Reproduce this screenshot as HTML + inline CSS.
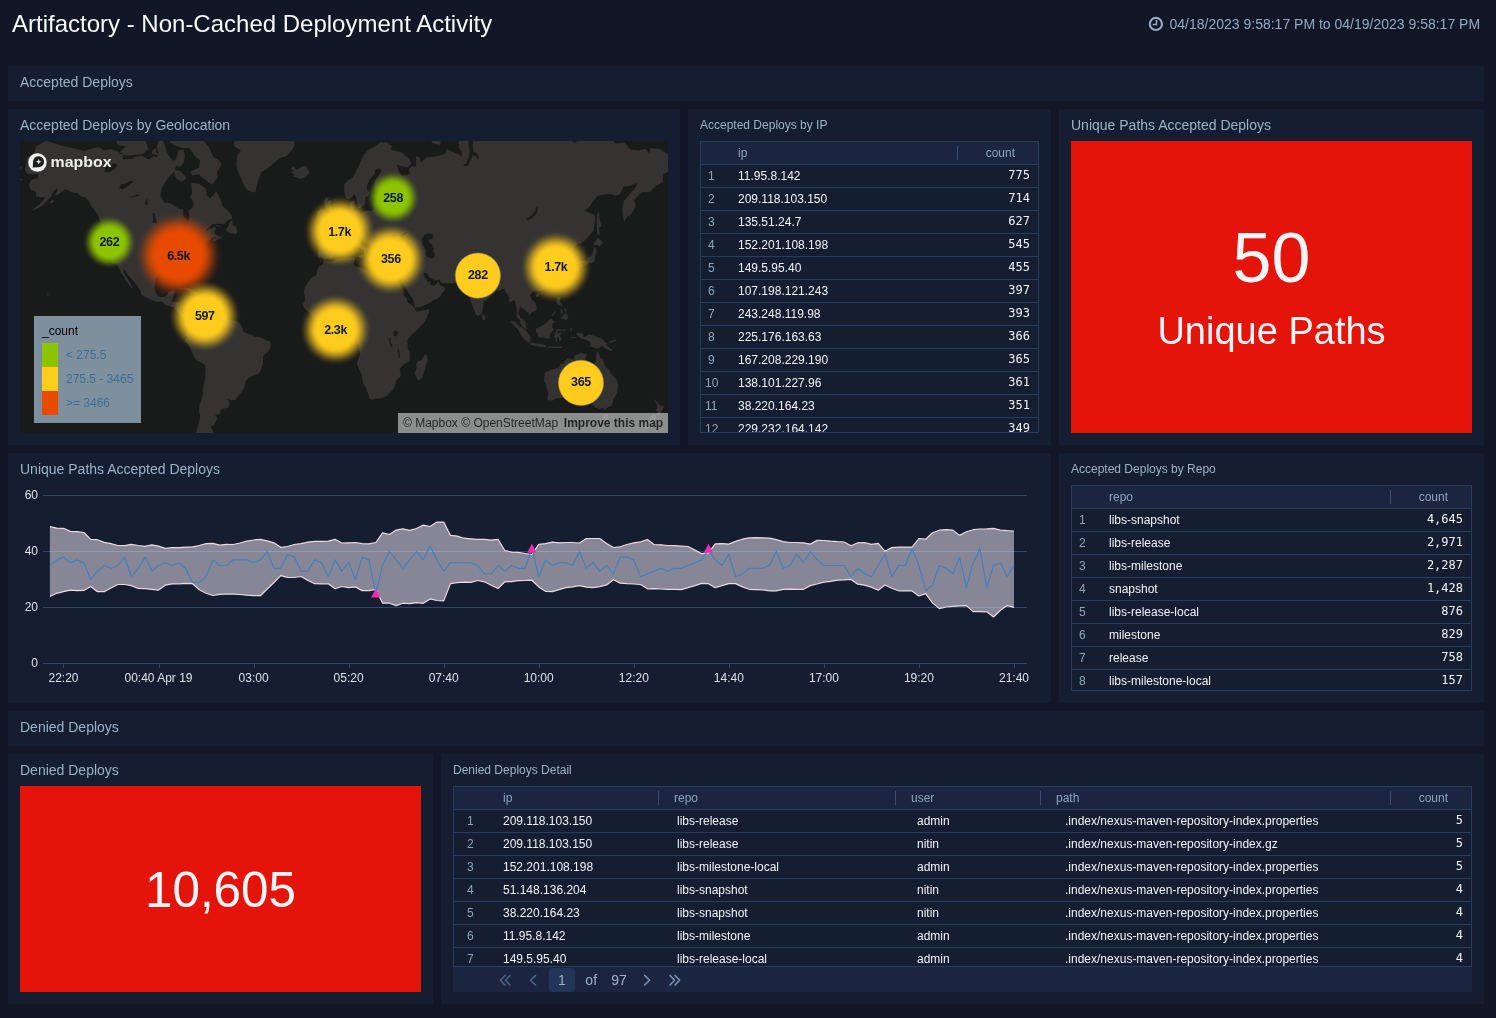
<!DOCTYPE html>
<html lang="en"><head><meta charset="utf-8"><title>Artifactory - Non-Cached Deployment Activity</title>
<style>
*{box-sizing:border-box;margin:0;padding:0}
html,body{width:1496px;height:1018px;overflow:hidden;background:#111726;font-family:"Liberation Sans",sans-serif;}
#root{position:absolute;left:0;top:0;width:1496px;height:1018px;will-change:transform}
.abs{position:absolute}
.panel{position:absolute;background:#151d30}
.ptitle{position:absolute;left:12px;top:8px;font-size:14px;line-height:16px;color:#9cb2c9;white-space:nowrap}
.ptitle.sm{font-size:12px;top:8px}
.sec{position:absolute;left:8px;width:1476px;height:35px;background:#151d30;color:#9cb2c9;font-size:14px;line-height:16px;padding:8px 12px}
.tbl{position:absolute;border:1px solid #283c5e;overflow:hidden;font-size:12px}
.tr{position:absolute;left:0;right:0;height:23px;border-bottom:1px solid #283c5e;}
.tr.h{background:#1b2540;color:#8ea4bc}
.c{position:absolute;top:0;line-height:22px;white-space:nowrap;color:#f0f3f7}
.tr.h .c{color:#8ea4bc}
.c.n{color:#8ea4bc}
.c.m{font-family:"DejaVu Sans Mono",monospace;text-align:right;top:-1px}
.sep{position:absolute;top:4px;width:1px;height:14px;background:#3b4e6e}
</style></head>
<body>
<div id="root">
<div class="abs" style="left:12px;top:10px;font-size:24px;line-height:28px;color:#f6f8fa;white-space:nowrap">Artifactory - Non-Cached Deployment Activity</div>
<svg class="abs" style="left:1147px;top:15px" width="18" height="18" viewBox="0 0 18 18"><circle cx="8.9" cy="8.95" r="6.1" fill="none" stroke="#96aac0" stroke-width="2.1"/><path d="M9.5 5.1V9.5H5.7" fill="none" stroke="#96aac0" stroke-width="1.6"/></svg>
<div class="abs" style="left:1169.5px;top:16px;font-size:14px;line-height:16px;color:#96aac0;white-space:nowrap">04/18/2023 9:58:17 PM to 04/19/2023 9:58:17 PM</div>
<div class="sec" style="top:66px">Accepted Deploys</div>
<div class="sec" style="top:711px">Denied Deploys</div>
<div class="panel" style="left:8px;top:109px;width:672px;height:336px"><div class="ptitle">Accepted Deploys by Geolocation</div><svg class="abs" style="left:12px;top:32px" width="648" height="292" viewBox="20 141 648 292" font-family="Liberation Sans, sans-serif">
<rect x="20" y="141" width="648" height="292" fill="#191a1a"/>
<path d="M25.0,169.5L27.8,156.8L34.3,153.2L36.3,146.3L46.1,140.7L54.6,143.5L61.9,145.8L74.9,148.5L84.1,151.1L89.6,149.0L98.8,146.9L104.4,150.6L111.8,149.0L122.8,153.7L122.8,159.2L132.1,158.7L135.7,156.8L141.3,155.8L148.7,159.2L154.2,156.3L157.9,157.3L156.0,150.6L157.9,142.4L160.6,137.2L164.3,143.5L166.2,150.6L168.9,155.8L172.6,160.7L176.3,159.2L178.2,150.6L183.7,149.6L185.0,155.8L183.7,163.1L180.0,166.8L176.3,165.9L174.5,171.3L170.8,175.2L168.0,178.1L164.3,183.8L161.6,188.4L160.3,195.8L164.3,202.8L168.9,202.8L172.6,204.5L178.2,208.4L183.2,209.1L183.3,216.0L187.4,221.1L189.2,220.2L189.6,215.7L188.3,210.7L192.9,207.1L193.7,202.8L190.2,196.9L192.0,192.2L191.1,183.0L198.5,183.4L205.8,188.4L206.8,195.8L210.5,198.3L214.2,194.0L216.0,190.7L220.6,199.4L222.5,206.1L228.0,211.0L231.7,215.7L232.2,218.7L227.1,220.8L224.3,224.0L216.9,223.7L212.3,224.0L207.7,228.8L204.0,233.2L208.6,229.6L215.1,226.8L216.4,228.2L214.2,231.0L215.4,234.3L217.8,235.6L221.5,236.7L224.3,234.3L222.5,237.4L217.8,239.5L213.6,241.8L212.9,239.5L216.0,236.9L211.4,238.2L211.4,239.3L207.7,240.8L205.3,242.1L204.6,244.6L205.8,246.6L203.1,247.3L198.5,249.3L198.1,252.0L195.7,254.3L194.8,257.4L195.3,261.0L193.3,263.1L191.1,264.8L188.7,266.8L185.6,269.5L184.8,272.3L186.7,278.6L187.2,282.1L185.9,283.5L184.1,281.7L182.4,278.0L182.2,275.0L180.0,273.3L177.3,274.0L173.6,272.7L170.8,272.9L170.1,275.0L167.1,274.8L161.9,274.0L159.7,275.0L156.0,277.6L155.1,281.7L154.6,288.8L156.0,292.7L157.9,295.7L160.6,297.2L165.3,296.5L167.7,294.7L168.2,291.8L172.6,290.6L174.9,291.2L173.6,294.7L172.6,298.6L171.3,301.5L176.3,301.7L180.9,303.0L181.3,308.2L180.6,311.0L182.8,314.2L185.6,315.1L188.3,313.8L191.5,315.1L192.4,315.7L192.0,317.5L190.2,315.7L187.4,317.9L184.6,317.2L181.9,316.0L178.2,312.9L176.7,311.0L173.6,307.2L169.9,306.3L166.2,305.3L161.6,301.5L157.0,302.1L151.4,300.1L146.8,297.6L141.3,294.7L140.4,290.8L138.5,287.2L134.8,282.7L131.1,278.6L127.4,274.4L125.6,270.5L123.2,269.7L123.7,273.3L126.9,277.6L129.7,281.7L131.5,285.4L133.0,287.6L131.7,287.8L128.4,284.1L124.7,279.6L124.1,276.5L121.3,273.3L119.0,267.9L116.4,264.6L112.5,263.5L110.1,258.7L109.0,256.0L106.6,252.0L105.7,249.8L105.9,243.4L106.2,235.1L104.9,229.1L108.1,227.4L105.3,224.6L100.7,221.7L98.8,217.2L95.2,211.0L92.4,207.8L88.7,201.1L85.0,197.6L81.3,196.5L77.1,192.9L71.2,192.2L65.6,189.2L61.0,192.2L58.2,194.7L55.1,195.1L58.2,187.7L53.6,191.1L50.9,196.5L46.3,201.8L42.6,205.5L37.0,208.7L31.5,210.7L36.1,206.8L39.8,204.5L43.5,200.0L45.0,196.9L41.6,197.2L36.1,196.5L36.1,192.2L30.6,189.2L28.7,184.6L31.5,179.8L38.0,178.1L38.0,173.9L34.3,174.3L27.8,173.9Z M689.2,169.5L692.0,156.8L698.5,153.2L700.5,146.3L710.3,140.7L718.8,143.5L726.1,145.8L739.1,148.5L748.3,151.1L753.8,149.0L763.0,146.9L768.6,150.6L776.0,149.0L787.0,153.7L787.0,159.2L796.2,158.7L799.9,156.8L805.5,155.8L812.9,159.2L818.4,156.3L822.1,157.3L820.2,150.6L822.1,142.4L824.8,137.2L828.5,143.5L830.4,150.6L833.1,155.8L836.8,160.7L840.5,159.2L842.4,150.6L847.9,149.6L849.2,155.8L847.9,163.1L844.2,166.8L840.5,165.9L838.7,171.3L835.0,175.2L832.2,178.1L828.5,183.8L825.8,188.4L824.5,195.8L828.5,202.8L833.1,202.8L836.8,204.5L842.4,208.4L847.4,209.1L847.5,216.0L851.6,221.1L853.4,220.2L853.8,215.7L852.5,210.7L857.1,207.1L857.9,202.8L854.4,196.9L856.2,192.2L855.3,183.0L862.7,183.4L870.0,188.4L871.0,195.8L874.7,198.3L878.4,194.0L880.2,190.7L884.8,199.4L886.7,206.1L892.2,211.0L895.9,215.7L896.4,218.7L891.3,220.8L888.5,224.0L881.1,223.7L876.5,224.0L871.9,228.8L868.2,233.2L872.8,229.6L879.3,226.8L880.6,228.2L878.4,231.0L879.6,234.3L882.0,235.6L885.7,236.7L888.5,234.3L886.7,237.4L882.0,239.5L877.8,241.8L877.1,239.5L880.2,236.9L875.6,238.2L875.6,239.3L871.9,240.8L869.5,242.1L868.8,244.6L870.0,246.6L867.3,247.3L862.7,249.3L862.3,252.0L859.9,254.3L859.0,257.4L859.5,261.0L857.5,263.1L855.3,264.8L852.9,266.8L849.8,269.5L849.0,272.3L850.9,278.6L851.4,282.1L850.1,283.5L848.3,281.7L846.6,278.0L846.4,275.0L844.2,273.3L841.5,274.0L837.8,272.7L835.0,272.9L834.3,275.0L831.3,274.8L826.1,274.0L823.9,275.0L820.2,277.6L819.3,281.7L818.8,288.8L820.2,292.7L822.1,295.7L824.8,297.2L829.5,296.5L831.9,294.7L832.4,291.8L836.8,290.6L839.1,291.2L837.8,294.7L836.8,298.6L835.5,301.5L840.5,301.7L845.1,303.0L845.5,308.2L844.8,311.0L847.0,314.2L849.8,315.1L852.5,313.8L855.7,315.1L856.6,315.7L856.2,317.5L854.4,315.7L851.6,317.9L848.8,317.2L846.1,316.0L842.4,312.9L840.9,311.0L837.8,307.2L834.1,306.3L830.4,305.3L825.8,301.5L821.2,302.1L815.6,300.1L811.0,297.6L805.5,294.7L804.6,290.8L802.7,287.2L799.0,282.7L795.3,278.6L791.6,274.4L789.8,270.5L787.4,269.7L787.9,273.3L791.1,277.6L793.9,281.7L795.7,285.4L797.2,287.6L795.9,287.8L792.6,284.1L788.9,279.6L788.3,276.5L785.5,273.3L783.2,267.9L780.6,264.6L776.7,263.5L774.3,258.7L773.2,256.0L770.8,252.0L769.9,249.8L770.1,243.4L770.4,235.1L769.1,229.1L772.3,227.4L769.5,224.6L764.9,221.7L763.0,217.2L759.3,211.0L756.6,207.8L752.9,201.1L749.2,197.6L745.5,196.5L741.3,192.9L735.4,192.2L729.8,189.2L725.2,192.2L722.5,194.7L719.3,195.1L722.5,187.7L717.8,191.1L715.1,196.5L710.5,201.8L706.8,205.5L701.2,208.7L695.7,210.7L700.3,206.8L704.0,204.5L707.7,200.0L709.2,196.9L705.8,197.2L700.3,196.5L700.3,192.2L694.8,189.2L692.9,184.6L695.7,179.8L702.2,178.1L702.2,173.9L698.5,174.3L692.0,173.9Z M221.5,164.5L216.9,172.2L217.8,177.3L215.1,181.0L212.3,184.6L208.6,182.2L203.1,178.1L198.5,174.3L192.0,175.2L191.1,171.3L198.5,167.7L200.3,160.7L194.8,155.8L189.2,147.9L181.9,147.9L174.5,145.2L169.9,142.4L170.8,127.3L178.2,126.0L187.4,126.0L194.8,131.7L204.0,141.3L209.5,147.9L213.2,156.8L220.6,161.6Z M119.1,153.2L126.5,155.8L135.7,154.8L143.1,154.2L148.7,149.0L145.0,139.5L141.3,130.5L132.1,130.5L124.7,128.6L117.3,133.6L115.4,139.5L118.2,145.2L126.5,146.3L121.0,150.6Z M103.5,136.6L108.1,141.3L112.7,139.5L117.3,133.6L121.0,127.3L115.4,121.9L106.2,121.9L104.4,130.5Z M151.4,153.2L156.0,155.3L158.8,152.2L157.0,148.5L153.3,149.0Z M174.5,169.9L180.0,170.8L185.6,176.4L186.5,178.5L181.9,181.4L176.3,178.5L174.5,175.2Z M225.6,231.3L231.7,233.5L236.3,234.0L237.8,231.3L236.3,228.8L235.7,226.6L232.6,225.1L232.2,220.2L229.8,221.7L228.4,226.0L226.1,229.6Z M107.1,229.1L103.5,228.0L98.3,222.5L100.7,222.2L104.4,224.6L106.8,227.4Z M178.2,290.2L181.9,288.0L185.6,287.4L191.1,289.0L195.7,291.8L198.1,293.3L196.6,293.9L191.6,293.9L190.2,291.8L185.6,290.0L182.8,289.2L180.0,289.8Z M197.7,296.5L199.6,294.1L202.7,293.9L206.0,294.3L208.8,296.5L205.8,297.0L203.3,298.2L201.2,297.2L197.7,297.0Z M190.5,296.9L192.9,296.7L194.2,297.6L192.0,298.0Z M211.0,296.7L213.8,296.9L213.6,297.6L211.0,297.6Z M298.1,109.7L298.1,124.0L294.4,136.6L294.4,145.2L293.5,147.9L287.0,155.8L279.6,158.3L274.1,163.1L266.7,169.1L261.2,172.2L257.5,182.6L255.3,192.2L252.0,192.2L246.4,189.2L242.8,182.6L239.1,174.3L236.3,165.4L237.2,155.8L240.9,150.6L234.4,146.3L234.1,139.5L231.7,130.5L228.0,109.7Z M290.2,169.5L293.5,165.9L296.3,169.9L301.8,166.8L305.5,165.4L308.1,169.9L309.9,172.2L307.3,175.2L300.9,178.9L296.3,177.3L293.1,176.9L294.4,174.3L290.7,172.6L294.4,170.8Z M192.4,315.5L194.8,314.0L196.6,311.4L198.5,310.6L202.2,308.7L203.5,310.0L205.8,309.1L209.5,311.7L215.1,312.5L220.6,311.5L222.5,313.8L224.3,315.7L229.8,320.3L235.4,320.7L240.0,323.1L242.8,328.6L242.8,331.4L246.4,333.2L252.0,334.7L253.8,336.4L258.4,336.8L263.0,338.2L266.4,340.3L270.1,341.6L270.8,346.2L268.6,350.9L265.8,353.7L263.0,356.5L263.0,363.2L261.2,369.1L259.4,373.0L254.7,375.0L250.1,377.0L245.5,381.1L245.1,386.3L241.8,391.6L238.1,396.0L235.4,399.7L230.8,400.2L227.4,398.6L229.5,403.1L228.7,407.3L220.6,409.7L220.2,414.5L215.1,414.5L217.3,418.2L214.5,424.6L210.5,427.2L213.6,431.2L209.5,438.2L207.7,442.6L208.8,445.3L204.0,449.6L198.5,444.1L195.7,435.4L197.5,427.2L200.3,416.9L199.0,410.8L199.4,405.0L201.2,400.4L203.1,393.8L203.3,387.3L204.9,379.1L205.5,371.0L205.3,365.8L202.2,363.2L196.6,360.2L194.2,357.1L192.6,353.7L189.2,346.2L187.4,343.4L185.2,341.6L185.0,339.3L187.4,337.5L185.7,335.5L186.5,332.3L187.4,329.9L189.2,328.6L190.0,326.8L192.0,324.0L192.0,319.4L191.1,317.5Z M324.1,260.6L331.3,261.9L336.8,259.0L344.2,258.3L351.6,257.4L353.8,257.4L355.3,258.3L354.4,261.3L353.4,264.2L355.3,266.2L359.0,267.1L363.0,268.4L367.3,271.4L371.0,272.5L371.9,269.0L375.6,267.1L381.1,269.5L388.5,271.4L392.2,270.1L394.6,270.8L395.1,273.3L396.8,277.6L398.7,282.7L400.5,285.8L402.9,289.8L403.6,291.8L403.8,295.7L406.0,297.6L407.9,302.4L411.0,304.4L414.7,308.0L414.9,310.0L417.1,312.1L421.7,310.6L429.5,309.3L429.1,312.1L426.3,318.5L423.6,323.1L419.9,326.8L415.3,331.4L411.6,334.7L408.8,337.9L407.3,340.6L407.9,344.3L407.5,348.1L409.7,351.3L409.9,358.4L408.8,361.3L403.3,364.8L399.6,369.1L400.5,373.0L400.3,377.0L395.9,380.1L395.5,383.2L394.6,387.3L391.3,391.6L386.7,396.0L382.2,398.2L375.6,398.6L371.9,400.0L368.9,398.6L368.6,394.9L366.4,388.4L363.0,383.2L361.8,375.0L359.0,369.1L356.8,364.2L358.1,359.4L360.3,353.7L359.0,348.1L357.5,342.5L356.2,338.8L352.5,336.0L351.6,332.9L352.5,329.6L352.9,325.9L351.4,323.1L347.9,323.3L345.1,323.3L343.3,319.9L338.7,319.8L333.2,321.8L329.5,322.0L325.8,322.0L321.2,323.3L318.4,322.2L314.7,319.0L311.0,315.7L310.1,312.9L307.3,311.0L304.2,308.3L302.9,304.0L304.6,301.5L304.9,295.7L303.6,291.8L305.5,286.8L307.7,282.7L311.0,278.2L314.7,276.1L316.9,274.0L317.1,270.1L319.3,266.2L322.5,264.6Z M426.0,353.7L427.8,360.4L426.3,364.2L425.0,369.1L422.6,377.0L420.8,379.5L418.0,380.1L415.6,376.0L414.9,372.6L416.7,369.1L416.2,364.2L418.0,361.3L421.7,360.0L423.6,356.5Z M324.7,260.1L323.2,258.3L321.2,257.6L318.6,257.8L317.5,253.9L318.8,248.3L318.0,243.4L320.2,241.6L325.8,242.1L331.3,242.3L332.6,239.5L332.8,235.6L330.4,232.1L326.3,230.2L326.5,228.5L331.7,228.2L331.9,225.4L335.0,226.3L337.8,224.0L339.6,221.4L341.8,220.2L343.3,217.2L344.2,214.7L347.9,213.8L350.7,213.2L351.2,210.0L349.9,207.4L350.1,202.8L353.1,200.7L354.6,200.4L354.0,204.5L354.9,207.8L353.1,210.0L355.3,211.6L358.1,211.3L361.2,212.9L365.4,211.0L369.1,210.3L371.5,211.3L373.7,208.7L373.7,202.8L376.5,200.4L378.4,202.8L380.0,197.9L378.4,195.1L383.0,194.0L386.7,194.0L390.4,192.6L387.6,190.3L383.0,190.7L377.4,192.6L374.7,189.9L374.3,186.5L374.7,180.6L380.2,173.0L381.7,170.4L379.3,168.6L375.6,169.5L374.3,174.3L369.1,180.6L366.9,186.5L366.7,189.9L369.5,192.2L368.2,195.8L365.4,197.6L365.4,202.8L364.5,205.5L361.8,206.1L361.2,208.1L359.0,208.1L358.4,205.5L356.8,201.1L355.7,195.8L354.4,194.0L351.6,197.6L347.9,199.4L345.3,196.5L344.2,190.3L344.2,184.6L347.9,180.6L352.5,177.7L355.3,173.0L358.1,167.7L360.8,160.7L363.6,155.8L368.2,150.1L373.7,146.9L381.1,141.9L386.7,142.4L392.2,146.3L390.4,149.6L395.9,151.1L401.4,152.2L409.7,159.2L411.2,164.0L407.9,167.2L401.4,166.3L396.8,164.5L399.2,172.2L401.4,175.6L405.1,175.2L409.7,173.9L408.8,168.6L412.5,165.9L416.2,166.8L416.2,160.7L415.8,155.8L419.9,157.3L420.8,163.1L423.6,159.7L427.2,157.3L433.7,156.8L440.2,155.3L445.7,153.2L446.6,149.0L453.1,151.7L458.6,154.2L461.4,156.8L462.3,152.2L458.6,147.9L458.6,139.5L462.3,130.5L467.8,131.7L468.4,142.4L469.7,151.7L468.8,157.3L466.0,163.5L463.2,164.9L464.1,166.3L467.8,165.9L470.6,160.2L472.5,155.3L476.1,156.8L478.0,159.7L478.9,157.3L476.1,152.7L473.4,151.7L472.6,145.2L473.9,133.6L482.6,127.3L495.5,117.1L510.3,109.7L526.9,95.9L541.6,105.8L544.4,125.3L556.4,130.5L569.3,127.3L573.0,142.4L574.9,142.4L580.4,139.5L587.8,140.1L593.3,133.6L602.5,134.8L611.8,139.5L615.4,143.5L624.7,142.4L630.2,149.6L633.9,150.1L639.4,150.6L645.0,148.5L649.6,153.2L650.5,147.9L659.7,149.0L667.1,153.7L674.5,160.7L681.9,164.0L686.1,167.7L680.9,174.3L676.3,173.5L670.8,169.9L667.1,172.2L663.4,174.3L662.5,182.6L656.0,185.4L649.6,192.2L641.3,192.2L636.7,197.6L633.9,200.0L635.7,206.1L633.9,210.0L630.2,215.0L627.4,216.3L624.1,221.7L622.8,215.7L622.3,207.8L623.7,201.1L628.4,195.8L633.0,190.3L636.7,185.7L637.6,182.6L630.2,185.7L623.7,186.5L620.1,194.0L615.4,195.8L609.9,194.0L603.4,194.7L597.9,195.8L593.3,201.1L588.7,207.8L584.4,210.3L588.7,212.6L593.3,214.1L595.5,217.2L594.2,224.6L593.9,230.2L590.5,234.3L585.9,239.5L580.4,243.9L578.5,242.9L576.1,245.1L574.3,247.1L573.9,249.5L570.2,252.0L572.1,254.3L573.7,257.8L573.6,261.3L571.2,262.8L568.4,263.7L568.0,261.3L568.6,257.8L565.6,256.0L566.0,252.0L564.3,251.0L560.1,253.1L559.2,253.1L560.1,249.5L558.2,248.6L554.6,252.4L552.3,253.1L553.6,255.5L554.6,257.1L557.9,256.0L561.0,257.1L558.2,259.0L555.5,261.7L557.3,265.7L559.7,269.5L559.7,271.6L558.2,272.7L560.1,273.8L559.2,276.9L556.4,280.7L554.6,283.3L552.7,285.0L549.9,287.4L545.9,289.0L541.6,290.2L538.5,291.2L538.0,293.1L537.4,290.8L535.2,290.4L532.4,291.8L530.6,294.7L530.2,296.7L532.4,300.0L535.2,302.4L536.7,307.2L536.5,310.0L533.3,311.9L532.0,312.3L529.6,314.7L528.4,315.5L528.7,312.9L526.9,311.9L524.7,310.0L523.7,308.7L521.3,307.8L521.0,306.4L519.5,306.4L519.5,309.1L518.2,311.9L518.2,314.2L520.1,316.0L520.4,318.1L522.6,319.0L525.0,321.2L526.0,324.0L526.0,326.4L527.4,328.8L526.0,329.0L523.2,327.2L521.9,325.9L520.4,323.1L520.1,320.3L518.6,318.5L516.4,316.6L516.7,312.9L517.1,309.1L515.8,305.3L515.1,300.9L513.0,300.1L510.8,301.9L509.0,301.5L509.4,297.6L507.5,294.3L505.3,291.8L504.4,288.8L502.0,289.2L499.2,290.2L495.5,291.2L495.1,293.1L492.7,294.3L490.0,297.0L486.8,300.1L483.5,302.1L483.0,306.3L482.6,310.0L482.2,312.3L480.8,314.2L479.3,314.9L478.0,316.4L475.8,313.8L474.3,310.0L472.8,306.6L471.5,303.4L470.2,299.6L469.3,295.7L469.3,291.8L468.8,290.6L467.8,291.8L465.6,292.3L462.3,289.4L464.1,288.2L461.4,286.8L459.2,284.8L457.7,283.1L453.1,283.1L448.5,283.5L443.9,282.9L440.7,282.5L439.8,279.6L436.5,280.3L434.6,280.5L431.9,278.6L429.1,277.6L428.2,274.4L425.4,272.5L423.6,273.3L423.6,274.6L424.5,276.9L426.9,280.0L427.6,282.1L429.1,281.7L430.0,281.7L430.0,284.1L431.9,285.4L434.6,285.4L437.4,282.7L438.9,281.3L439.2,284.1L441.1,286.2L443.3,286.6L445.3,288.8L443.9,291.8L442.0,293.1L441.5,295.7L439.2,297.6L436.5,299.2L432.8,300.3L430.9,302.1L425.4,304.9L421.7,306.6L418.0,307.6L415.3,307.8L414.7,306.3L413.8,303.4L413.8,300.5L411.6,297.6L409.7,294.3L407.3,291.2L406.0,287.8L403.8,284.8L402.7,281.7L400.1,277.6L399.4,274.4L398.3,278.0L395.9,275.5L395.1,273.3L394.6,270.8L397.7,270.5L399.2,267.9L400.5,264.6L401.2,261.3L401.8,258.5L398.7,258.5L395.9,259.7L392.2,258.3L389.4,259.4L386.7,258.5L385.4,256.7L383.9,254.3L384.4,252.0L383.3,250.5L385.7,249.5L388.5,249.5L388.5,248.1L393.1,247.8L396.8,245.9L399.6,245.9L402.3,247.6L406.0,248.6L408.8,248.3L411.6,247.1L411.8,244.6L408.8,242.1L406.0,239.8L404.2,238.2L403.3,237.4L405.1,234.3L407.5,232.4L404.2,232.9L400.5,234.3L399.6,236.9L402.3,237.4L400.1,238.5L397.7,239.8L396.8,238.2L395.0,237.2L396.8,235.6L394.0,234.3L391.8,234.3L389.8,237.4L388.0,240.8L386.7,243.4L386.1,244.6L386.7,246.4L388.5,247.6L386.7,248.3L383.9,249.3L383.0,248.8L379.3,248.8L378.4,250.3L377.1,249.8L376.9,252.4L378.4,254.8L379.3,255.5L377.4,256.7L377.4,259.0L376.0,258.7L374.7,257.8L374.3,255.0L372.8,253.1L371.0,250.0L370.8,246.4L369.1,244.6L366.4,242.9L363.6,240.8L361.8,237.7L360.3,236.7L358.1,237.4L357.9,240.3L360.3,242.1L361.8,245.1L364.5,246.4L369.1,250.3L366.4,249.8L365.6,252.0L366.5,253.1L365.4,254.8L364.0,255.5L364.5,253.1L363.6,250.5L361.8,249.1L359.0,247.6L356.6,245.4L354.4,243.4L353.4,240.8L351.2,239.8L348.8,241.3L346.1,243.1L343.3,242.3L340.9,242.9L340.9,245.9L338.7,247.6L336.5,248.8L334.6,252.0L335.4,253.6L333.7,256.0L331.3,258.3L326.7,258.5Z M-339.5,260.1L-341.0,258.3L-343.0,257.6L-345.6,257.8L-346.7,253.9L-345.4,248.3L-346.2,243.4L-344.0,241.6L-338.4,242.1L-332.9,242.3L-331.6,239.5L-331.4,235.6L-333.8,232.1L-337.9,230.2L-337.7,228.5L-332.5,228.2L-332.3,225.4L-329.2,226.3L-326.4,224.0L-324.6,221.4L-322.4,220.2L-320.9,217.2L-320.0,214.7L-316.3,213.8L-313.5,213.2L-313.0,210.0L-314.3,207.4L-314.1,202.8L-311.1,200.7L-309.6,200.4L-310.2,204.5L-309.3,207.8L-311.1,210.0L-308.9,211.6L-306.1,211.3L-303.0,212.9L-298.8,211.0L-295.1,210.3L-292.7,211.3L-290.5,208.7L-290.5,202.8L-287.7,200.4L-285.8,202.8L-284.2,197.9L-285.8,195.1L-281.2,194.0L-277.5,194.0L-273.9,192.6L-276.6,190.3L-281.2,190.7L-286.8,192.6L-289.5,189.9L-289.9,186.5L-289.5,180.6L-284.0,173.0L-282.5,170.4L-284.9,168.6L-288.6,169.5L-289.9,174.3L-295.1,180.6L-297.3,186.5L-297.5,189.9L-294.7,192.2L-296.0,195.8L-298.8,197.6L-298.8,202.8L-299.7,205.5L-302.4,206.1L-303.0,208.1L-305.2,208.1L-305.8,205.5L-307.4,201.1L-308.5,195.8L-309.8,194.0L-312.6,197.6L-316.3,199.4L-318.9,196.5L-320.0,190.3L-320.0,184.6L-316.3,180.6L-311.7,177.7L-308.9,173.0L-306.1,167.7L-303.4,160.7L-300.6,155.8L-296.0,150.1L-290.5,146.9L-283.1,141.9L-277.5,142.4L-272.0,146.3L-273.9,149.6L-268.3,151.1L-262.8,152.2L-254.5,159.2L-253.0,164.0L-256.3,167.2L-262.8,166.3L-267.4,164.5L-265.0,172.2L-262.8,175.6L-259.1,175.2L-254.5,173.9L-255.4,168.6L-251.7,165.9L-248.0,166.8L-248.0,160.7L-248.4,155.8L-244.3,157.3L-243.4,163.1L-240.6,159.7L-237.0,157.3L-230.5,156.8L-224.0,155.3L-218.5,153.2L-217.6,149.0L-211.1,151.7L-205.6,154.2L-202.8,156.8L-201.9,152.2L-205.6,147.9L-205.6,139.5L-201.9,130.5L-196.4,131.7L-195.8,142.4L-194.5,151.7L-195.4,157.3L-198.2,163.5L-201.0,164.9L-200.0,166.3L-196.4,165.9L-193.6,160.2L-191.7,155.3L-188.1,156.8L-186.2,159.7L-185.3,157.3L-188.1,152.7L-190.8,151.7L-191.6,145.2L-190.3,133.6L-181.6,127.3L-168.7,117.1L-153.9,109.7L-137.3,95.9L-122.6,105.8L-119.8,125.3L-107.8,130.5L-94.9,127.3L-91.2,142.4L-89.3,142.4L-83.8,139.5L-76.4,140.1L-70.9,133.6L-61.7,134.8L-52.4,139.5L-48.8,143.5L-39.5,142.4L-34.0,149.6L-30.3,150.1L-24.8,150.6L-19.2,148.5L-14.6,153.2L-13.7,147.9L-4.5,149.0L2.9,153.7L10.3,160.7L17.7,164.0L21.9,167.7L16.7,174.3L12.1,173.5L6.6,169.9L2.9,172.2L-0.8,174.3L-1.7,182.6L-8.2,185.4L-14.6,192.2L-22.9,192.2L-27.5,197.6L-30.3,200.0L-28.5,206.1L-30.3,210.0L-34.0,215.0L-36.8,216.3L-40.1,221.7L-41.4,215.7L-41.9,207.8L-40.5,201.1L-35.8,195.8L-31.2,190.3L-27.5,185.7L-26.6,182.6L-34.0,185.7L-40.5,186.5L-44.1,194.0L-48.8,195.8L-54.3,194.0L-60.8,194.7L-66.3,195.8L-70.9,201.1L-75.5,207.8L-79.8,210.3L-75.5,212.6L-70.9,214.1L-68.7,217.2L-70.0,224.6L-70.3,230.2L-73.7,234.3L-78.3,239.5L-83.8,243.9L-85.7,242.9L-88.1,245.1L-89.9,247.1L-90.3,249.5L-94.0,252.0L-92.1,254.3L-90.5,257.8L-90.6,261.3L-93.0,262.8L-95.8,263.7L-96.2,261.3L-95.6,257.8L-98.6,256.0L-98.2,252.0L-99.9,251.0L-104.1,253.1L-105.0,253.1L-104.1,249.5L-106.0,248.6L-109.6,252.4L-111.9,253.1L-110.6,255.5L-109.6,257.1L-106.3,256.0L-103.2,257.1L-106.0,259.0L-108.7,261.7L-106.9,265.7L-104.5,269.5L-104.5,271.6L-106.0,272.7L-104.1,273.8L-105.0,276.9L-107.8,280.7L-109.6,283.3L-111.5,285.0L-114.3,287.4L-118.3,289.0L-122.6,290.2L-125.7,291.2L-126.2,293.1L-126.8,290.8L-129.0,290.4L-131.8,291.8L-133.6,294.7L-134.0,296.7L-131.8,300.0L-129.0,302.4L-127.5,307.2L-127.7,310.0L-130.9,311.9L-132.2,312.3L-134.6,314.7L-135.8,315.5L-135.5,312.9L-137.3,311.9L-139.5,310.0L-140.5,308.7L-142.9,307.8L-143.2,306.4L-144.7,306.4L-144.7,309.1L-146.0,311.9L-146.0,314.2L-144.1,316.0L-143.8,318.1L-141.6,319.0L-139.2,321.2L-138.2,324.0L-138.2,326.4L-136.8,328.8L-138.2,329.0L-141.0,327.2L-142.3,325.9L-143.8,323.1L-144.1,320.3L-145.6,318.5L-147.8,316.6L-147.5,312.9L-147.1,309.1L-148.4,305.3L-149.1,300.9L-151.2,300.1L-153.4,301.9L-155.2,301.5L-154.8,297.6L-156.7,294.3L-158.9,291.8L-159.8,288.8L-162.2,289.2L-165.0,290.2L-168.7,291.2L-169.1,293.1L-171.5,294.3L-174.2,297.0L-177.4,300.1L-180.7,302.1L-181.2,306.3L-181.6,310.0L-182.0,312.3L-183.4,314.2L-184.9,314.9L-186.2,316.4L-188.4,313.8L-189.9,310.0L-191.4,306.6L-192.7,303.4L-194.0,299.6L-194.9,295.7L-194.9,291.8L-195.4,290.6L-196.4,291.8L-198.6,292.3L-201.9,289.4L-200.0,288.2L-202.8,286.8L-205.0,284.8L-206.5,283.1L-211.1,283.1L-215.7,283.5L-220.3,282.9L-223.5,282.5L-224.4,279.6L-227.7,280.3L-229.6,280.5L-232.3,278.6L-235.1,277.6L-236.0,274.4L-238.8,272.5L-240.6,273.3L-240.6,274.6L-239.7,276.9L-237.3,280.0L-236.6,282.1L-235.1,281.7L-234.2,281.7L-234.2,284.1L-232.3,285.4L-229.6,285.4L-226.8,282.7L-225.3,281.3L-225.0,284.1L-223.1,286.2L-220.9,286.6L-218.9,288.8L-220.3,291.8L-222.2,293.1L-222.7,295.7L-225.0,297.6L-227.7,299.2L-231.4,300.3L-233.3,302.1L-238.8,304.9L-242.5,306.6L-246.2,307.6L-248.9,307.8L-249.5,306.3L-250.4,303.4L-250.4,300.5L-252.6,297.6L-254.5,294.3L-256.9,291.2L-258.2,287.8L-260.4,284.8L-261.5,281.7L-264.1,277.6L-264.8,274.4L-265.9,278.0L-268.3,275.5L-269.1,273.3L-269.6,270.8L-266.5,270.5L-265.0,267.9L-263.7,264.6L-263.0,261.3L-262.4,258.5L-265.5,258.5L-268.3,259.7L-272.0,258.3L-274.8,259.4L-277.5,258.5L-278.8,256.7L-280.3,254.3L-279.8,252.0L-280.9,250.5L-278.5,249.5L-275.7,249.5L-275.7,248.1L-271.1,247.8L-267.4,245.9L-264.6,245.9L-261.9,247.6L-258.2,248.6L-255.4,248.3L-252.6,247.1L-252.4,244.6L-255.4,242.1L-258.2,239.8L-260.0,238.2L-260.9,237.4L-259.1,234.3L-256.7,232.4L-260.0,232.9L-263.7,234.3L-264.6,236.9L-261.9,237.4L-264.1,238.5L-266.5,239.8L-267.4,238.2L-269.2,237.2L-267.4,235.6L-270.2,234.3L-272.4,234.3L-274.4,237.4L-276.2,240.8L-277.5,243.4L-278.1,244.6L-277.5,246.4L-275.7,247.6L-277.5,248.3L-280.3,249.3L-281.2,248.8L-284.9,248.8L-285.8,250.3L-287.1,249.8L-287.3,252.4L-285.8,254.8L-284.9,255.5L-286.8,256.7L-286.8,259.0L-288.2,258.7L-289.5,257.8L-289.9,255.0L-291.4,253.1L-293.2,250.0L-293.4,246.4L-295.1,244.6L-297.8,242.9L-300.6,240.8L-302.4,237.7L-303.9,236.7L-306.1,237.4L-306.3,240.3L-303.9,242.1L-302.4,245.1L-299.7,246.4L-295.1,250.3L-297.8,249.8L-298.6,252.0L-297.7,253.1L-298.8,254.8L-300.2,255.5L-299.7,253.1L-300.6,250.5L-302.4,249.1L-305.2,247.6L-307.6,245.4L-309.8,243.4L-310.8,240.8L-313.0,239.8L-315.4,241.3L-318.1,243.1L-320.9,242.3L-323.3,242.9L-323.3,245.9L-325.5,247.6L-327.7,248.8L-329.6,252.0L-328.8,253.6L-330.5,256.0L-332.9,258.3L-337.5,258.5Z M324.5,224.3L328.5,223.7L333.2,222.5L337.4,221.1L336.5,220.2L338.1,216.6L335.6,215.7L335.0,213.5L332.8,210.7L331.3,206.8L329.5,206.1L331.3,200.7L327.6,200.4L329.1,197.2L325.8,197.2L323.9,201.1L324.9,206.1L326.1,209.4L329.1,209.7L329.5,214.4L326.7,215.0L327.3,217.8L325.4,219.3L329.1,220.5L327.1,221.7Z M323.9,218.1L323.6,214.1L324.7,210.7L321.5,208.4L319.3,210.7L316.6,211.9L316.9,214.7L316.0,218.7L317.5,220.2L321.2,218.7Z M358.1,255.5L363.6,255.0L363.0,258.5L358.6,256.7Z M350.3,248.3L352.7,248.3L352.7,252.7L350.7,253.1Z M351.1,244.4L352.5,243.9L352.3,247.1L351.2,246.9Z M378.5,261.3L383.3,261.9L380.2,262.4Z M394.6,262.4L398.7,261.0L397.4,263.1Z M430.0,139.5L432.8,143.5L440.2,144.7L441.1,136.6L445.7,124.0L436.5,124.0L430.9,133.6Z M482.6,313.4L484.8,315.7L485.9,318.5L484.4,319.9L483.0,320.3L482.2,317.5Z M576.5,264.6L579.5,264.0L584.1,263.3L585.4,265.7L587.8,263.3L591.1,263.1L593.3,261.9L594.8,260.8L595.1,256.7L596.6,252.0L596.1,247.3L593.9,247.8L593.1,252.0L591.1,256.0L587.8,257.8L587.2,259.0L585.9,260.8L580.4,261.3L576.7,263.5Z M574.9,265.7L578.0,265.5L577.6,270.1L575.8,270.8L574.3,267.5Z M579.5,264.8L583.2,264.2L582.6,266.2L580.4,267.3Z M593.3,247.1L595.1,244.6L599.4,245.9L603.4,242.6L601.2,240.8L597.0,236.9L596.3,240.8L593.9,242.9Z M597.0,235.6L599.8,233.5L598.8,227.4L601.6,226.6L599.4,218.7L598.8,211.6L597.0,214.1L596.6,221.7L597.0,230.2Z M558.2,283.3L560.1,283.7L558.1,289.8L556.6,287.8Z M535.6,295.1L538.9,293.7L539.8,294.5L538.0,296.9L535.6,296.7Z M557.3,296.7L560.5,296.7L560.1,301.5L563.8,307.2L561.9,305.7L559.2,305.3L557.3,304.4L556.4,301.5Z M560.1,318.5L562.9,315.3L566.5,313.2L568.4,317.5L566.5,320.7L563.8,318.5Z M564.3,308.2L566.5,308.5L566.2,312.5L564.7,311.9Z M560.1,309.5L562.3,310.0L562.5,314.2L561.0,313.2Z M551.4,315.7L555.5,310.4L556.0,311.7L552.3,316.0Z M536.1,328.1L538.0,328.3L540.7,326.2L543.5,324.9L547.2,322.2L550.5,318.5L552.7,320.3L554.9,321.8L552.7,323.6L552.3,327.7L554.2,329.6L551.8,331.4L549.9,334.2L549.6,338.4L546.3,338.8L543.5,337.5L540.7,337.5L538.3,336.6L538.0,333.8L536.1,332.0L536.1,329.6Z M510.8,321.1L514.9,321.8L519.5,325.9L522.3,327.7L526.0,330.5L527.8,333.2L530.6,336.9L530.2,342.1L527.8,341.9L523.7,338.8L520.4,334.2L517.1,328.3L514.0,325.5L511.2,322.2Z M529.3,344.0L531.9,342.5L535.2,343.6L539.2,343.4L542.9,344.2L546.1,345.6L546.1,347.5L539.8,346.8L534.3,345.8L531.3,344.9Z M555.5,341.6L555.8,337.9L554.2,336.6L556.0,330.5L557.9,329.0L562.9,329.7L565.6,328.4L564.7,330.7L558.2,330.7L556.8,333.1L559.2,333.1L562.5,332.9L561.6,334.2L559.2,334.7L561.6,338.8L561.0,341.6L559.2,340.3L558.2,336.9L557.0,336.9L557.1,341.6Z M576.7,332.9L582.2,332.9L584.1,337.5L589.2,334.2L595.1,336.2L601.6,338.4L604.4,341.6L607.7,343.8L606.2,344.3L608.1,346.6L612.7,350.5L610.8,350.9L606.2,349.0L601.6,345.6L598.8,348.4L595.1,348.3L591.5,346.4L589.6,346.8L591.1,344.3L589.6,341.6L585.0,339.5L581.3,338.4L578.5,336.6L576.7,334.2Z M547.2,346.6L554.6,346.6L561.9,346.6L561.9,347.9L554.6,347.9L547.2,347.7Z M562.9,350.5L569.3,347.0L568.4,348.1L563.8,350.5Z M570.2,327.7L572.1,328.6L571.2,332.3L570.2,330.5Z M571.2,336.9L576.3,336.9L575.8,338.0L571.2,337.9Z M609.0,341.6L615.4,339.2L616.0,340.6L610.8,343.0Z M544.8,373.0L545.7,372.6L550.5,370.1L554.6,369.1L559.2,367.1L560.6,363.6L563.0,364.0L564.7,361.3L567.5,357.9L570.8,358.8L571.7,359.4L573.9,359.2L574.9,355.6L576.3,354.5L579.5,353.9L579.8,352.6L584.4,354.1L587.4,354.1L585.9,356.5L585.0,359.0L587.8,360.9L591.8,363.8L594.8,364.2L596.1,359.4L596.4,354.6L597.9,351.3L600.3,358.1L603.1,359.2L604.9,366.9L609.0,369.5L610.8,373.6L613.2,376.0L616.9,379.7L618.2,385.2L617.3,391.6L615.4,396.0L613.6,398.6L611.8,405.0L611.6,406.1L608.1,407.1L604.9,409.7L602.2,407.8L599.8,409.2L595.1,407.5L592.9,405.0L592.0,402.0L589.6,401.8L589.8,398.6L589.1,400.9L589.2,395.1L585.9,400.0L585.0,399.7L582.6,396.0L578.5,393.8L573.0,392.9L567.5,394.4L563.8,396.0L562.9,398.0L556.4,398.0L552.7,400.4L549.0,400.2L547.2,399.1L548.3,393.8L547.2,389.5L545.7,384.2L544.0,381.1L544.4,377.0Z M602.0,414.0L605.3,414.7L608.6,414.2L608.4,417.4L606.8,419.9L604.4,421.0L603.1,418.2Z M653.6,399.1L656.6,401.5L659.4,404.5L664.3,406.6L661.9,410.8L659.7,415.2L657.5,415.2L657.5,411.6L655.7,410.4L657.5,407.3L656.6,403.8Z M-10.6,399.1L-7.6,401.5L-4.8,404.5L0.1,406.6L-2.3,410.8L-4.5,415.2L-6.7,415.2L-6.7,411.6L-8.5,410.4L-6.7,407.3L-7.6,403.8Z M653.6,413.3L656.4,415.7L653.8,420.7L650.9,423.3L649.9,427.2L645.9,428.8L642.2,427.2L645.0,423.3L649.6,419.4L652.3,414.5Z M-10.6,413.3L-7.8,415.7L-10.4,420.7L-13.3,423.3L-14.3,427.2L-18.3,428.8L-22.0,427.2L-19.2,423.3L-14.6,419.4L-11.9,414.5Z M47.2,293.3L49.0,294.1L47.9,295.7L47.2,294.5Z M49.9,201.1L53.6,199.4L54.0,201.8L50.9,203.5Z M18.2,178.1L23.2,179.8L21.4,180.6L18.6,179.3Z M682.4,178.1L687.4,179.8L685.5,180.6L682.8,179.3Z M216.0,224.8L220.6,226.6L219.7,227.1L216.4,225.7Z" fill="#343332"/>
<path d="M425.4,234.3L429.1,232.9L432.8,234.3L432.8,238.2L430.0,239.5L428.2,239.3L430.0,242.9L432.4,244.6L432.2,247.1L434.3,248.8L432.8,250.8L434.3,253.6L434.3,257.4L430.9,258.5L427.8,257.1L425.4,254.8L426.0,250.3L423.6,246.4L422.3,242.6L421.7,239.5L423.6,236.1Z M526.3,220.2L528.7,219.9L533.3,216.9L536.7,213.5L538.0,207.8L536.7,206.8L535.2,211.0L532.4,214.7L529.6,216.9L526.9,218.7Z M390.7,192.2L393.1,191.8L395.9,189.2L395.0,186.5L391.3,186.5L390.0,189.2Z M398.7,188.4L401.4,187.7L401.4,184.6L399.6,181.8L398.7,184.6Z M393.5,332.3L394.0,330.8L396.8,330.7L398.1,332.3L397.7,334.2L395.9,336.4L394.0,336.0Z M388.9,337.9L390.0,337.7L390.9,342.5L392.6,347.3L391.3,347.3L389.4,343.4Z M397.7,349.0L398.8,349.2L399.6,353.7L400.1,358.1L399.0,357.9L398.3,353.7Z M165.3,233.5L169.9,230.2L172.6,228.0L176.3,228.8L178.5,230.7L178.9,234.3L175.4,234.3L172.6,232.9L168.0,233.7Z M173.0,245.9L174.5,246.6L175.8,243.9L175.8,239.5L177.8,236.1L175.4,236.1L173.4,238.8L172.6,242.1Z M179.1,235.9L181.3,237.4L180.9,240.8L182.8,243.1L184.3,242.1L185.0,238.2L187.4,239.3L186.5,236.9L183.7,235.3L180.0,235.1Z M181.3,246.4L184.6,246.9L189.2,244.1L188.3,243.6L183.7,244.6Z M188.0,242.6L192.9,242.6L194.2,240.8L191.1,240.8Z M152.7,223.1L157.0,223.1L156.0,218.7L154.2,213.2L152.3,213.2L153.3,218.7Z M119.1,188.4L122.8,189.2L126.5,187.3L132.1,182.6L133.3,181.4L130.2,181.0L125.6,183.4L121.0,184.6Z M104.4,172.2L109.0,172.2L113.6,169.9L117.3,165.4L114.5,163.1L109.9,165.4L105.3,166.8Z M129.3,197.2L133.9,195.8L139.4,194.4L139.4,195.5L133.9,196.9Z M145.0,204.5L147.7,204.5L147.7,199.4L145.9,199.4Z" fill="#191a1a"/>
<defs>
<radialGradient id="gG"><stop offset="0" stop-color="#8cc400"/><stop offset="0.5" stop-color="#8cc400"/><stop offset="0.55" stop-color="#8cc400" stop-opacity="0.972"/><stop offset="0.60" stop-color="#8cc400" stop-opacity="0.896"/><stop offset="0.65" stop-color="#8cc400" stop-opacity="0.784"/><stop offset="0.70" stop-color="#8cc400" stop-opacity="0.648"/><stop offset="0.75" stop-color="#8cc400" stop-opacity="0.500"/><stop offset="0.80" stop-color="#8cc400" stop-opacity="0.352"/><stop offset="0.85" stop-color="#8cc400" stop-opacity="0.216"/><stop offset="0.90" stop-color="#8cc400" stop-opacity="0.104"/><stop offset="0.95" stop-color="#8cc400" stop-opacity="0.028"/><stop offset="1" stop-color="#8cc400" stop-opacity="0"/></radialGradient>
<radialGradient id="gY"><stop offset="0" stop-color="#ffcc1d"/><stop offset="0.5" stop-color="#ffcc1d"/><stop offset="0.55" stop-color="#ffcc1d" stop-opacity="0.972"/><stop offset="0.60" stop-color="#ffcc1d" stop-opacity="0.896"/><stop offset="0.65" stop-color="#ffcc1d" stop-opacity="0.784"/><stop offset="0.70" stop-color="#ffcc1d" stop-opacity="0.648"/><stop offset="0.75" stop-color="#ffcc1d" stop-opacity="0.500"/><stop offset="0.80" stop-color="#ffcc1d" stop-opacity="0.352"/><stop offset="0.85" stop-color="#ffcc1d" stop-opacity="0.216"/><stop offset="0.90" stop-color="#ffcc1d" stop-opacity="0.104"/><stop offset="0.95" stop-color="#ffcc1d" stop-opacity="0.028"/><stop offset="1" stop-color="#ffcc1d" stop-opacity="0"/></radialGradient>
<radialGradient id="gO"><stop offset="0" stop-color="#e84a00"/><stop offset="0.5" stop-color="#e84a00"/><stop offset="0.55" stop-color="#e84a00" stop-opacity="0.972"/><stop offset="0.60" stop-color="#e84a00" stop-opacity="0.896"/><stop offset="0.65" stop-color="#e84a00" stop-opacity="0.784"/><stop offset="0.70" stop-color="#e84a00" stop-opacity="0.648"/><stop offset="0.75" stop-color="#e84a00" stop-opacity="0.500"/><stop offset="0.80" stop-color="#e84a00" stop-opacity="0.352"/><stop offset="0.85" stop-color="#e84a00" stop-opacity="0.216"/><stop offset="0.90" stop-color="#e84a00" stop-opacity="0.104"/><stop offset="0.95" stop-color="#e84a00" stop-opacity="0.028"/><stop offset="1" stop-color="#e84a00" stop-opacity="0"/></radialGradient>
</defs>
<circle cx="109.4" cy="242.2" r="27.0" fill="url(#gG)"/>
<circle cx="178.6" cy="255.3" r="44.0" fill="url(#gO)"/>
<circle cx="204.8" cy="316.1" r="36.3" fill="url(#gY)"/>
<circle cx="339.6" cy="231.3" r="36.3" fill="url(#gY)"/>
<circle cx="393.1" cy="197.6" r="27.0" fill="url(#gG)"/>
<circle cx="390.9" cy="259.2" r="36.3" fill="url(#gY)"/>
<circle cx="335.6" cy="329.6" r="36.3" fill="url(#gY)"/>
<circle cx="477.9" cy="275.6" r="22.6" fill="#ffcc1d" stroke="#8f8a63" stroke-width="0.6"/>
<circle cx="556.0" cy="266.9" r="36.3" fill="url(#gY)"/>
<circle cx="581.0" cy="382.9" r="22.6" fill="#ffcc1d" stroke="#8f8a63" stroke-width="0.6"/>
<text x="109.4" y="245.8" text-anchor="middle" font-size="12.5" font-weight="bold" letter-spacing="-0.35" fill="#101a2e">262</text>
<text x="178.6" y="259.8" text-anchor="middle" font-size="12.5" font-weight="bold" letter-spacing="-0.35" fill="#101a2e">6.5k</text>
<text x="204.8" y="319.7" text-anchor="middle" font-size="12.5" font-weight="bold" letter-spacing="-0.35" fill="#101a2e">597</text>
<text x="339.6" y="236.1" text-anchor="middle" font-size="12.5" font-weight="bold" letter-spacing="-0.35" fill="#101a2e">1.7k</text>
<text x="393.1" y="201.7" text-anchor="middle" font-size="12.5" font-weight="bold" letter-spacing="-0.35" fill="#101a2e">258</text>
<text x="390.9" y="263.2" text-anchor="middle" font-size="12.5" font-weight="bold" letter-spacing="-0.35" fill="#101a2e">356</text>
<text x="335.6" y="334.1" text-anchor="middle" font-size="12.5" font-weight="bold" letter-spacing="-0.35" fill="#101a2e">2.3k</text>
<text x="477.9" y="278.6" text-anchor="middle" font-size="12.5" font-weight="bold" letter-spacing="-0.35" fill="#101a2e">282</text>
<text x="556.0" y="271.4" text-anchor="middle" font-size="12.5" font-weight="bold" letter-spacing="-0.35" fill="#101a2e">1.7k</text>
<text x="581.0" y="385.9" text-anchor="middle" font-size="12.5" font-weight="bold" letter-spacing="-0.35" fill="#101a2e">365</text>
<g><circle cx="37.45" cy="162.5" r="9.4" fill="#f0f0f0" stroke="#191a1a" stroke-opacity="0.3" stroke-width="1"/><path d="M32.7 167.4L33.1 161.3A5.5 5.5 0 1 1 38.8 167.2Z" fill="#1e1f1f"/><path d="M38.7 158.8L39.45 160.95L41.6 161.7L39.45 162.45L38.7 164.6L37.95 162.45L35.8 161.7L37.95 160.95Z" fill="#f0f0f0"/><text x="50.6" y="167" font-size="14.3" font-weight="bold" textLength="61" lengthAdjust="spacingAndGlyphs" fill="#f0f0f0" stroke="#191a1a" stroke-opacity="0.3" stroke-width="0.6" paint-order="stroke">mapbox</text></g>
<g font-size="12"><rect x="34" y="316" width="107" height="107" fill="#7e909e"/><text x="42" y="335" fill="#000">_count</text><rect x="42" y="343" width="16" height="24" fill="#8cc400"/><rect x="42" y="367" width="16" height="24" fill="#ffcc1d"/><rect x="42" y="391" width="16" height="24" fill="#e84a00"/><text x="66" y="359" fill="#3f6e94">&lt; 275.5</text><text x="66" y="383" fill="#3f6e94">275.5 - 3465</text><text x="66" y="407" fill="#3f6e94">&gt;= 3466</text></g>
<g font-size="12"><rect x="398" y="413" width="270" height="20" fill="#ffffff" fill-opacity="0.5"/><text x="403" y="427" fill="#000" fill-opacity="0.75">© Mapbox © OpenStreetMap <tspan font-weight="bold" dx="2.4">Improve this map</tspan></text></g>
</svg></div>
<div class="panel" style="left:688px;top:109px;width:363px;height:336px"><div class="ptitle sm">Accepted Deploys by IP</div><div class="tbl" style="left:12px;top:32px;width:339px;height:292px">
<div class="tr h" style="top:0">
<div class="c" style="left:37px">ip</div>
<div class="sep" style="left:256px"></div>
<div class="c" style="right:23px">count</div>
</div>
<div class="tr" style="top:23px">
<div class="c n" style="left:7px">1</div>
<div class="c" style="left:37px">11.95.8.142</div>
<div class="c m" style="right:8px">775</div>
</div>
<div class="tr" style="top:46px">
<div class="c n" style="left:7px">2</div>
<div class="c" style="left:37px">209.118.103.150</div>
<div class="c m" style="right:8px">714</div>
</div>
<div class="tr" style="top:69px">
<div class="c n" style="left:7px">3</div>
<div class="c" style="left:37px">135.51.24.7</div>
<div class="c m" style="right:8px">627</div>
</div>
<div class="tr" style="top:92px">
<div class="c n" style="left:7px">4</div>
<div class="c" style="left:37px">152.201.108.198</div>
<div class="c m" style="right:8px">545</div>
</div>
<div class="tr" style="top:115px">
<div class="c n" style="left:7px">5</div>
<div class="c" style="left:37px">149.5.95.40</div>
<div class="c m" style="right:8px">455</div>
</div>
<div class="tr" style="top:138px">
<div class="c n" style="left:7px">6</div>
<div class="c" style="left:37px">107.198.121.243</div>
<div class="c m" style="right:8px">397</div>
</div>
<div class="tr" style="top:161px">
<div class="c n" style="left:7px">7</div>
<div class="c" style="left:37px">243.248.119.98</div>
<div class="c m" style="right:8px">393</div>
</div>
<div class="tr" style="top:184px">
<div class="c n" style="left:7px">8</div>
<div class="c" style="left:37px">225.176.163.63</div>
<div class="c m" style="right:8px">366</div>
</div>
<div class="tr" style="top:207px">
<div class="c n" style="left:7px">9</div>
<div class="c" style="left:37px">167.208.229.190</div>
<div class="c m" style="right:8px">365</div>
</div>
<div class="tr" style="top:230px">
<div class="c n" style="left:4px">10</div>
<div class="c" style="left:37px">138.101.227.96</div>
<div class="c m" style="right:8px">361</div>
</div>
<div class="tr" style="top:253px">
<div class="c n" style="left:4px">11</div>
<div class="c" style="left:37px">38.220.164.23</div>
<div class="c m" style="right:8px">351</div>
</div>
<div class="tr" style="top:276px">
<div class="c n" style="left:4px">12</div>
<div class="c" style="left:37px">229.232.164.142</div>
<div class="c m" style="right:8px">349</div>
</div>
</div></div>
<div class="panel" style="left:1059px;top:109px;width:425px;height:336px"><div class="ptitle">Unique Paths Accepted Deploys</div><div class="abs" style="left:12px;top:32px;width:401px;height:292px;background:#e5140b;color:#f4f5f7;text-align:center"><div class="abs" style="left:0;right:0;top:77px;font-size:70px;line-height:80px">50</div><div class="abs" style="left:0;right:0;top:167px;font-size:38px;line-height:46px">Unique Paths</div></div></div>
<div class="panel" style="left:8px;top:453px;width:1043px;height:250px"><div class="ptitle">Unique Paths Accepted Deploys</div><svg class="abs" style="left:0;top:0" width="1043" height="250" viewBox="8 453 1043 250" font-family="Liberation Sans, sans-serif" font-size="12">
<line x1="43" x2="1027" y1="495.5" y2="495.5" stroke="#2e4468" stroke-width="1"/>
<line x1="43" x2="1027" y1="551.5" y2="551.5" stroke="#2e4468" stroke-width="1"/>
<line x1="43" x2="1027" y1="607.5" y2="607.5" stroke="#2e4468" stroke-width="1"/>
<line x1="43" x2="1027" y1="663.5" y2="663.5" stroke="#2e4468" stroke-width="1"/>
<line x1="63.5" x2="63.5" y1="663.5" y2="668" stroke="#2e4468" stroke-width="1"/>
<text x="63.5" y="682" text-anchor="middle" fill="#dce1e8">22:20</text>
<line x1="159.5" x2="159.5" y1="663.5" y2="668" stroke="#2e4468" stroke-width="1"/>
<text x="158.5" y="682" text-anchor="middle" fill="#dce1e8">00:40 Apr 19</text>
<line x1="254.5" x2="254.5" y1="663.5" y2="668" stroke="#2e4468" stroke-width="1"/>
<text x="253.6" y="682" text-anchor="middle" fill="#dce1e8">03:00</text>
<line x1="349.5" x2="349.5" y1="663.5" y2="668" stroke="#2e4468" stroke-width="1"/>
<text x="348.6" y="682" text-anchor="middle" fill="#dce1e8">05:20</text>
<line x1="444.5" x2="444.5" y1="663.5" y2="668" stroke="#2e4468" stroke-width="1"/>
<text x="443.7" y="682" text-anchor="middle" fill="#dce1e8">07:40</text>
<line x1="539.5" x2="539.5" y1="663.5" y2="668" stroke="#2e4468" stroke-width="1"/>
<text x="538.7" y="682" text-anchor="middle" fill="#dce1e8">10:00</text>
<line x1="634.5" x2="634.5" y1="663.5" y2="668" stroke="#2e4468" stroke-width="1"/>
<text x="633.8" y="682" text-anchor="middle" fill="#dce1e8">12:20</text>
<line x1="729.5" x2="729.5" y1="663.5" y2="668" stroke="#2e4468" stroke-width="1"/>
<text x="728.8" y="682" text-anchor="middle" fill="#dce1e8">14:40</text>
<line x1="824.5" x2="824.5" y1="663.5" y2="668" stroke="#2e4468" stroke-width="1"/>
<text x="823.9" y="682" text-anchor="middle" fill="#dce1e8">17:00</text>
<line x1="919.5" x2="919.5" y1="663.5" y2="668" stroke="#2e4468" stroke-width="1"/>
<text x="918.9" y="682" text-anchor="middle" fill="#dce1e8">19:20</text>
<line x1="1014.5" x2="1014.5" y1="663.5" y2="668" stroke="#2e4468" stroke-width="1"/>
<text x="1014.0" y="682" text-anchor="middle" fill="#dce1e8">21:40</text>
<text x="38" y="499.3" text-anchor="end" fill="#dce1e8">60</text>
<text x="38" y="555.3" text-anchor="end" fill="#dce1e8">40</text>
<text x="38" y="611.3" text-anchor="end" fill="#dce1e8">20</text>
<text x="38" y="667.3" text-anchor="end" fill="#dce1e8">0</text>
<polygon points="49.9,526.7 56.7,528.1 63.5,528.3 70.3,531.4 77.1,531.6 83.9,532.5 90.7,539.3 97.4,539.7 104.2,542.4 111.0,543.7 117.8,545.5 124.6,545.6 131.4,544.4 138.2,545.5 145.0,546.4 151.8,544.8 158.5,546.1 165.3,548.4 172.1,547.7 178.9,547.6 185.7,547.1 192.5,546.8 199.3,545.5 206.1,543.6 212.9,543.3 219.6,545.2 226.4,544.3 233.2,544.5 240.0,543.0 246.8,541.2 253.6,540.0 260.4,539.3 267.2,540.9 274.0,542.8 280.7,547.3 287.5,546.5 294.3,544.5 301.1,543.7 307.9,542.1 314.7,541.3 321.5,541.3 328.3,541.2 335.1,539.3 341.8,543.0 348.6,542.8 355.4,542.5 362.2,543.7 369.0,543.9 375.8,542.5 382.6,532.8 389.4,534.5 396.2,530.1 402.9,528.9 409.7,530.3 416.5,528.5 423.3,525.1 430.1,526.5 436.9,522.1 443.7,522.1 450.5,535.4 457.3,536.1 464.0,538.2 470.8,538.8 477.6,539.3 484.4,539.3 491.2,540.1 498.0,539.3 504.8,550.5 511.6,552.1 518.4,552.4 525.1,553.5 531.9,554.5 538.7,544.4 545.5,543.6 552.3,542.2 559.1,542.8 565.9,542.5 572.7,542.5 579.5,543.0 586.3,538.5 593.0,538.5 599.8,538.5 606.6,543.4 613.4,547.5 620.2,546.8 627.0,544.5 633.8,542.8 640.6,541.8 647.4,539.6 654.1,544.5 660.9,544.8 667.7,545.5 674.5,545.7 681.3,546.1 688.1,546.5 694.9,550.1 701.7,553.7 708.5,552.8 715.2,543.9 722.0,543.6 728.8,544.1 735.6,541.4 742.4,539.2 749.2,537.8 756.0,537.7 762.8,537.8 769.6,538.2 776.3,539.7 783.1,541.7 789.9,542.5 796.7,542.5 803.5,542.8 810.3,544.1 817.1,540.4 823.9,540.5 830.7,541.2 837.4,541.7 844.2,542.0 851.0,545.7 857.8,542.8 864.6,542.5 871.4,544.4 878.2,543.4 885.0,551.3 891.8,547.6 898.5,547.1 905.3,547.1 912.1,547.1 918.9,538.5 925.7,539.2 932.5,532.8 939.3,530.2 946.1,529.7 952.9,530.1 959.6,535.4 966.4,531.8 973.2,529.7 980.0,529.0 986.8,528.9 993.6,528.3 1000.4,530.2 1007.2,530.7 1014.0,531.0 1014.0,607.4 1007.2,605.6 1000.4,610.3 993.6,617.0 986.8,611.8 980.0,611.6 973.2,611.6 966.4,605.6 959.6,605.9 952.9,606.4 946.1,607.0 939.3,608.6 932.5,602.9 925.7,593.6 918.9,596.0 912.1,590.9 905.3,590.9 898.5,590.8 891.8,588.2 885.0,585.0 878.2,590.2 871.4,587.2 864.6,585.2 857.8,584.2 851.0,579.4 844.2,579.9 837.4,580.2 830.7,581.3 823.9,582.2 817.1,584.0 810.3,585.6 803.5,589.3 796.7,589.3 789.9,589.2 783.1,589.3 776.3,590.9 769.6,590.9 762.8,589.8 756.0,589.6 749.2,589.3 742.4,586.9 735.6,583.6 728.8,583.7 722.0,585.6 715.2,587.7 708.5,583.7 701.7,583.4 694.9,585.6 688.1,587.6 681.3,589.6 674.5,589.4 667.7,589.3 660.9,589.0 654.1,588.6 647.4,588.8 640.6,584.5 633.8,584.0 627.0,583.7 620.2,583.2 613.4,579.7 606.6,584.9 599.8,586.6 593.0,587.6 586.3,587.2 579.5,585.6 572.7,586.9 565.9,587.6 559.1,589.6 552.3,591.6 545.5,591.3 538.7,586.9 531.9,580.2 525.1,580.5 518.4,580.6 511.6,581.6 504.8,581.8 498.0,588.5 491.2,585.2 484.4,581.8 477.6,580.5 470.8,582.4 464.0,582.1 457.3,582.6 450.5,583.6 443.7,600.9 436.9,600.5 430.1,598.9 423.3,603.3 416.5,602.7 409.7,603.7 402.9,603.2 396.2,605.6 389.4,603.2 382.6,603.2 375.8,589.3 369.0,590.6 362.2,590.6 355.4,586.9 348.6,587.6 341.8,586.5 335.1,588.8 328.3,583.8 321.5,583.8 314.7,583.7 307.9,580.5 301.1,576.5 294.3,577.5 287.5,577.3 280.7,575.7 274.0,582.5 267.2,589.0 260.4,595.7 253.6,595.7 246.8,595.2 240.0,594.5 233.2,594.1 226.4,594.0 219.6,594.4 212.9,595.5 206.1,593.3 199.3,589.8 192.5,583.7 185.7,583.4 178.9,583.8 172.1,583.8 165.3,585.2 158.5,590.1 151.8,589.4 145.0,588.6 138.2,588.5 131.4,585.6 124.6,584.5 117.8,584.5 111.0,588.0 104.2,591.7 97.4,591.7 90.7,586.6 83.9,590.4 77.1,590.6 70.3,590.2 63.5,591.6 56.7,593.3 49.9,596.5" fill="rgba(250,240,251,0.5)" stroke="none"/>
<polyline points="49.9,526.7 56.7,528.1 63.5,528.3 70.3,531.4 77.1,531.6 83.9,532.5 90.7,539.3 97.4,539.7 104.2,542.4 111.0,543.7 117.8,545.5 124.6,545.6 131.4,544.4 138.2,545.5 145.0,546.4 151.8,544.8 158.5,546.1 165.3,548.4 172.1,547.7 178.9,547.6 185.7,547.1 192.5,546.8 199.3,545.5 206.1,543.6 212.9,543.3 219.6,545.2 226.4,544.3 233.2,544.5 240.0,543.0 246.8,541.2 253.6,540.0 260.4,539.3 267.2,540.9 274.0,542.8 280.7,547.3 287.5,546.5 294.3,544.5 301.1,543.7 307.9,542.1 314.7,541.3 321.5,541.3 328.3,541.2 335.1,539.3 341.8,543.0 348.6,542.8 355.4,542.5 362.2,543.7 369.0,543.9 375.8,542.5 382.6,532.8 389.4,534.5 396.2,530.1 402.9,528.9 409.7,530.3 416.5,528.5 423.3,525.1 430.1,526.5 436.9,522.1 443.7,522.1 450.5,535.4 457.3,536.1 464.0,538.2 470.8,538.8 477.6,539.3 484.4,539.3 491.2,540.1 498.0,539.3 504.8,550.5 511.6,552.1 518.4,552.4 525.1,553.5 531.9,554.5 538.7,544.4 545.5,543.6 552.3,542.2 559.1,542.8 565.9,542.5 572.7,542.5 579.5,543.0 586.3,538.5 593.0,538.5 599.8,538.5 606.6,543.4 613.4,547.5 620.2,546.8 627.0,544.5 633.8,542.8 640.6,541.8 647.4,539.6 654.1,544.5 660.9,544.8 667.7,545.5 674.5,545.7 681.3,546.1 688.1,546.5 694.9,550.1 701.7,553.7 708.5,552.8 715.2,543.9 722.0,543.6 728.8,544.1 735.6,541.4 742.4,539.2 749.2,537.8 756.0,537.7 762.8,537.8 769.6,538.2 776.3,539.7 783.1,541.7 789.9,542.5 796.7,542.5 803.5,542.8 810.3,544.1 817.1,540.4 823.9,540.5 830.7,541.2 837.4,541.7 844.2,542.0 851.0,545.7 857.8,542.8 864.6,542.5 871.4,544.4 878.2,543.4 885.0,551.3 891.8,547.6 898.5,547.1 905.3,547.1 912.1,547.1 918.9,538.5 925.7,539.2 932.5,532.8 939.3,530.2 946.1,529.7 952.9,530.1 959.6,535.4 966.4,531.8 973.2,529.7 980.0,529.0 986.8,528.9 993.6,528.3 1000.4,530.2 1007.2,530.7 1014.0,531.0" fill="none" stroke="#eed9e2" stroke-width="1.2" stroke-linejoin="round"/>
<polyline points="49.9,596.5 56.7,593.3 63.5,591.6 70.3,590.2 77.1,590.6 83.9,590.4 90.7,586.6 97.4,591.7 104.2,591.7 111.0,588.0 117.8,584.5 124.6,584.5 131.4,585.6 138.2,588.5 145.0,588.6 151.8,589.4 158.5,590.1 165.3,585.2 172.1,583.8 178.9,583.8 185.7,583.4 192.5,583.7 199.3,589.8 206.1,593.3 212.9,595.5 219.6,594.4 226.4,594.0 233.2,594.1 240.0,594.5 246.8,595.2 253.6,595.7 260.4,595.7 267.2,589.0 274.0,582.5 280.7,575.7 287.5,577.3 294.3,577.5 301.1,576.5 307.9,580.5 314.7,583.7 321.5,583.8 328.3,583.8 335.1,588.8 341.8,586.5 348.6,587.6 355.4,586.9 362.2,590.6 369.0,590.6 375.8,589.3 382.6,603.2 389.4,603.2 396.2,605.6 402.9,603.2 409.7,603.7 416.5,602.7 423.3,603.3 430.1,598.9 436.9,600.5 443.7,600.9 450.5,583.6 457.3,582.6 464.0,582.1 470.8,582.4 477.6,580.5 484.4,581.8 491.2,585.2 498.0,588.5 504.8,581.8 511.6,581.6 518.4,580.6 525.1,580.5 531.9,580.2 538.7,586.9 545.5,591.3 552.3,591.6 559.1,589.6 565.9,587.6 572.7,586.9 579.5,585.6 586.3,587.2 593.0,587.6 599.8,586.6 606.6,584.9 613.4,579.7 620.2,583.2 627.0,583.7 633.8,584.0 640.6,584.5 647.4,588.8 654.1,588.6 660.9,589.0 667.7,589.3 674.5,589.4 681.3,589.6 688.1,587.6 694.9,585.6 701.7,583.4 708.5,583.7 715.2,587.7 722.0,585.6 728.8,583.7 735.6,583.6 742.4,586.9 749.2,589.3 756.0,589.6 762.8,589.8 769.6,590.9 776.3,590.9 783.1,589.3 789.9,589.2 796.7,589.3 803.5,589.3 810.3,585.6 817.1,584.0 823.9,582.2 830.7,581.3 837.4,580.2 844.2,579.9 851.0,579.4 857.8,584.2 864.6,585.2 871.4,587.2 878.2,590.2 885.0,585.0 891.8,588.2 898.5,590.8 905.3,590.9 912.1,590.9 918.9,596.0 925.7,593.6 932.5,602.9 939.3,608.6 946.1,607.0 952.9,606.4 959.6,605.9 966.4,605.6 973.2,611.6 980.0,611.6 986.8,611.8 993.6,617.0 1000.4,610.3 1007.2,605.6 1014.0,607.4" fill="none" stroke="#eed9e2" stroke-width="1.2" stroke-linejoin="round"/>
<polyline points="49.9,565.5 56.7,559.9 63.5,557.1 70.3,562.7 77.1,559.9 83.9,562.7 90.7,579.5 97.4,571.1 104.2,565.5 111.0,568.3 117.8,565.5 124.6,557.1 131.4,576.7 138.2,568.3 145.0,557.1 151.8,571.1 158.5,565.5 165.3,562.7 172.1,565.5 178.9,562.7 185.7,568.3 192.5,582.3 199.3,582.3 206.1,576.7 212.9,559.9 219.6,565.5 226.4,565.5 233.2,559.9 240.0,559.9 246.8,559.9 253.6,562.7 260.4,559.9 267.2,551.5 274.0,568.3 280.7,568.3 287.5,554.3 294.3,557.1 301.1,571.1 307.9,571.1 314.7,559.9 321.5,562.7 328.3,576.7 335.1,559.9 341.8,571.1 348.6,562.7 355.4,579.5 362.2,557.1 369.0,559.9 375.8,593.5 382.6,565.5 389.4,551.5 396.2,559.9 402.9,568.3 409.7,559.9 416.5,551.5 423.3,559.9 430.1,545.9 436.9,559.9 443.7,571.1 450.5,562.7 457.3,562.7 464.0,562.7 470.8,562.7 477.6,565.5 484.4,573.9 491.2,573.9 498.0,565.5 504.8,571.1 511.6,565.5 518.4,568.3 525.1,568.3 531.9,548.7 538.7,576.7 545.5,559.9 552.3,565.5 559.1,562.7 565.9,562.7 572.7,565.5 579.5,551.5 586.3,568.3 593.0,562.7 599.8,571.1 606.6,565.5 613.4,573.9 620.2,557.1 627.0,557.1 633.8,559.9 640.6,576.7 647.4,573.9 654.1,571.1 660.9,568.3 667.7,571.1 674.5,568.3 681.3,568.3 688.1,565.5 694.9,562.7 701.7,559.9 708.5,548.7 715.2,559.9 722.0,565.5 728.8,554.3 735.6,576.7 742.4,573.9 749.2,568.3 756.0,568.3 762.8,568.3 769.6,565.5 776.3,551.5 783.1,568.3 789.9,565.5 796.7,554.3 803.5,562.7 810.3,551.5 817.1,559.9 823.9,565.5 830.7,565.5 837.4,565.5 844.2,565.5 851.0,576.7 857.8,568.3 864.6,573.9 871.4,576.7 878.2,565.5 885.0,554.3 891.8,576.7 898.5,565.5 905.3,565.5 912.1,548.7 918.9,565.5 925.7,590.7 932.5,585.1 939.3,565.5 946.1,568.3 952.9,573.9 959.6,557.1 966.4,587.9 973.2,562.7 980.0,548.7 986.8,587.9 993.6,565.5 1000.4,562.7 1007.2,576.7 1014.0,565.5" fill="none" stroke="#4181bf" stroke-width="1.15" stroke-linejoin="round"/>
<polygon points="375.8,588.5 380.6,597.5 371.0,597.5" fill="#ef2cb0"/>
<polygon points="531.9,543.7 536.7,552.7 527.1,552.7" fill="#ef2cb0"/>
<polygon points="708.5,543.7 713.3,552.7 703.7,552.7" fill="#ef2cb0"/>
</svg></div>
<div class="panel" style="left:1059px;top:453px;width:425px;height:250px"><div class="ptitle sm">Accepted Deploys by Repo</div><div class="tbl" style="left:12px;top:32px;width:401px;height:206px">
<div class="tr h" style="top:0">
<div class="c" style="left:37px">repo</div>
<div class="sep" style="left:318px"></div>
<div class="c" style="right:23px">count</div>
</div>
<div class="tr" style="top:23px">
<div class="c n" style="left:7px">1</div>
<div class="c" style="left:37px">libs-snapshot</div>
<div class="c m" style="right:8px">4,645</div>
</div>
<div class="tr" style="top:46px">
<div class="c n" style="left:7px">2</div>
<div class="c" style="left:37px">libs-release</div>
<div class="c m" style="right:8px">2,971</div>
</div>
<div class="tr" style="top:69px">
<div class="c n" style="left:7px">3</div>
<div class="c" style="left:37px">libs-milestone</div>
<div class="c m" style="right:8px">2,287</div>
</div>
<div class="tr" style="top:92px">
<div class="c n" style="left:7px">4</div>
<div class="c" style="left:37px">snapshot</div>
<div class="c m" style="right:8px">1,428</div>
</div>
<div class="tr" style="top:115px">
<div class="c n" style="left:7px">5</div>
<div class="c" style="left:37px">libs-release-local</div>
<div class="c m" style="right:8px">876</div>
</div>
<div class="tr" style="top:138px">
<div class="c n" style="left:7px">6</div>
<div class="c" style="left:37px">milestone</div>
<div class="c m" style="right:8px">829</div>
</div>
<div class="tr" style="top:161px">
<div class="c n" style="left:7px">7</div>
<div class="c" style="left:37px">release</div>
<div class="c m" style="right:8px">758</div>
</div>
<div class="tr" style="top:184px">
<div class="c n" style="left:7px">8</div>
<div class="c" style="left:37px">libs-milestone-local</div>
<div class="c m" style="right:8px">157</div>
</div>
</div></div>
<div class="panel" style="left:8px;top:754px;width:425px;height:250px"><div class="ptitle">Denied Deploys</div><div class="abs" style="left:12px;top:32px;width:401px;height:206px;background:#e5140b;color:#f4f5f7;text-align:center"><div class="abs" style="left:0;right:0;top:74px;font-size:49.4px;line-height:60px">10,605</div></div></div>
<div class="panel" style="left:441px;top:754px;width:1043px;height:250px"><div class="ptitle sm">Denied Deploys Detail</div><div class="tbl" style="left:12px;top:32px;width:1019px;height:181px">
<div class="tr h" style="top:0">
<div class="c" style="left:49px">ip</div>
<div class="sep" style="left:204px"></div>
<div class="c" style="left:220px">repo</div>
<div class="sep" style="left:441px"></div>
<div class="c" style="left:457px">user</div>
<div class="sep" style="left:586px"></div>
<div class="c" style="left:602px">path</div>
<div class="sep" style="left:936px"></div>
<div class="c" style="right:23px">count</div>
</div>
<div class="tr" style="top:23px">
<div class="c n" style="left:13px">1</div>
<div class="c" style="left:49px">209.118.103.150</div>
<div class="c" style="left:223px">libs-release</div>
<div class="c" style="left:463px">admin</div>
<div class="c" style="left:611px">.index/nexus-maven-repository-index.properties</div>
<div class="c m" style="right:8px">5</div>
</div>
<div class="tr" style="top:46px">
<div class="c n" style="left:13px">2</div>
<div class="c" style="left:49px">209.118.103.150</div>
<div class="c" style="left:223px">libs-release</div>
<div class="c" style="left:463px">nitin</div>
<div class="c" style="left:611px">.index/nexus-maven-repository-index.gz</div>
<div class="c m" style="right:8px">5</div>
</div>
<div class="tr" style="top:69px">
<div class="c n" style="left:13px">3</div>
<div class="c" style="left:49px">152.201.108.198</div>
<div class="c" style="left:223px">libs-milestone-local</div>
<div class="c" style="left:463px">admin</div>
<div class="c" style="left:611px">.index/nexus-maven-repository-index.properties</div>
<div class="c m" style="right:8px">5</div>
</div>
<div class="tr" style="top:92px">
<div class="c n" style="left:13px">4</div>
<div class="c" style="left:49px">51.148.136.204</div>
<div class="c" style="left:223px">libs-snapshot</div>
<div class="c" style="left:463px">nitin</div>
<div class="c" style="left:611px">.index/nexus-maven-repository-index.properties</div>
<div class="c m" style="right:8px">4</div>
</div>
<div class="tr" style="top:115px">
<div class="c n" style="left:13px">5</div>
<div class="c" style="left:49px">38.220.164.23</div>
<div class="c" style="left:223px">libs-snapshot</div>
<div class="c" style="left:463px">nitin</div>
<div class="c" style="left:611px">.index/nexus-maven-repository-index.properties</div>
<div class="c m" style="right:8px">4</div>
</div>
<div class="tr" style="top:138px">
<div class="c n" style="left:13px">6</div>
<div class="c" style="left:49px">11.95.8.142</div>
<div class="c" style="left:223px">libs-milestone</div>
<div class="c" style="left:463px">admin</div>
<div class="c" style="left:611px">.index/nexus-maven-repository-index.properties</div>
<div class="c m" style="right:8px">4</div>
</div>
<div class="tr" style="top:161px">
<div class="c n" style="left:13px">7</div>
<div class="c" style="left:49px">149.5.95.40</div>
<div class="c" style="left:223px">libs-release-local</div>
<div class="c" style="left:463px">admin</div>
<div class="c" style="left:611px">.index/nexus-maven-repository-index.properties</div>
<div class="c m" style="right:8px">4</div>
</div>
</div><div class="abs" style="left:12px;top:213px;width:1019px;height:25px;background:#1b2540"></div><svg class="abs" style="left:12px;top:213px" width="1019" height="25" viewBox="453 967 1019 25" font-family="Liberation Sans, sans-serif" font-size="14"><rect x="549" y="968" width="26" height="24" rx="3" fill="#22365a"/><g fill="none" stroke-width="1.5" stroke-linecap="round" stroke-linejoin="round"><path d="M505 975.4L500.4 980.2L505 985M510 975.4L505.4 980.2L510 985" stroke="#4b6689"/><path d="M535.6 975.4L530.6 980.2L535.6 985" stroke="#4b6689"/><path d="M644.6 975.4L649.6 980.2L644.6 985" stroke="#7a98bd"/><path d="M670 975.4L674.6 980.2L670 985M675 975.4L679.6 980.2L675 985" stroke="#7a98bd"/></g><text x="562" y="985" text-anchor="middle" fill="#9fb2ca">1</text><text x="591.2" y="985" text-anchor="middle" fill="#9fb2ca">of</text><text x="619" y="985" text-anchor="middle" fill="#9fb2ca">97</text></svg></div>
</div>
</body></html>
